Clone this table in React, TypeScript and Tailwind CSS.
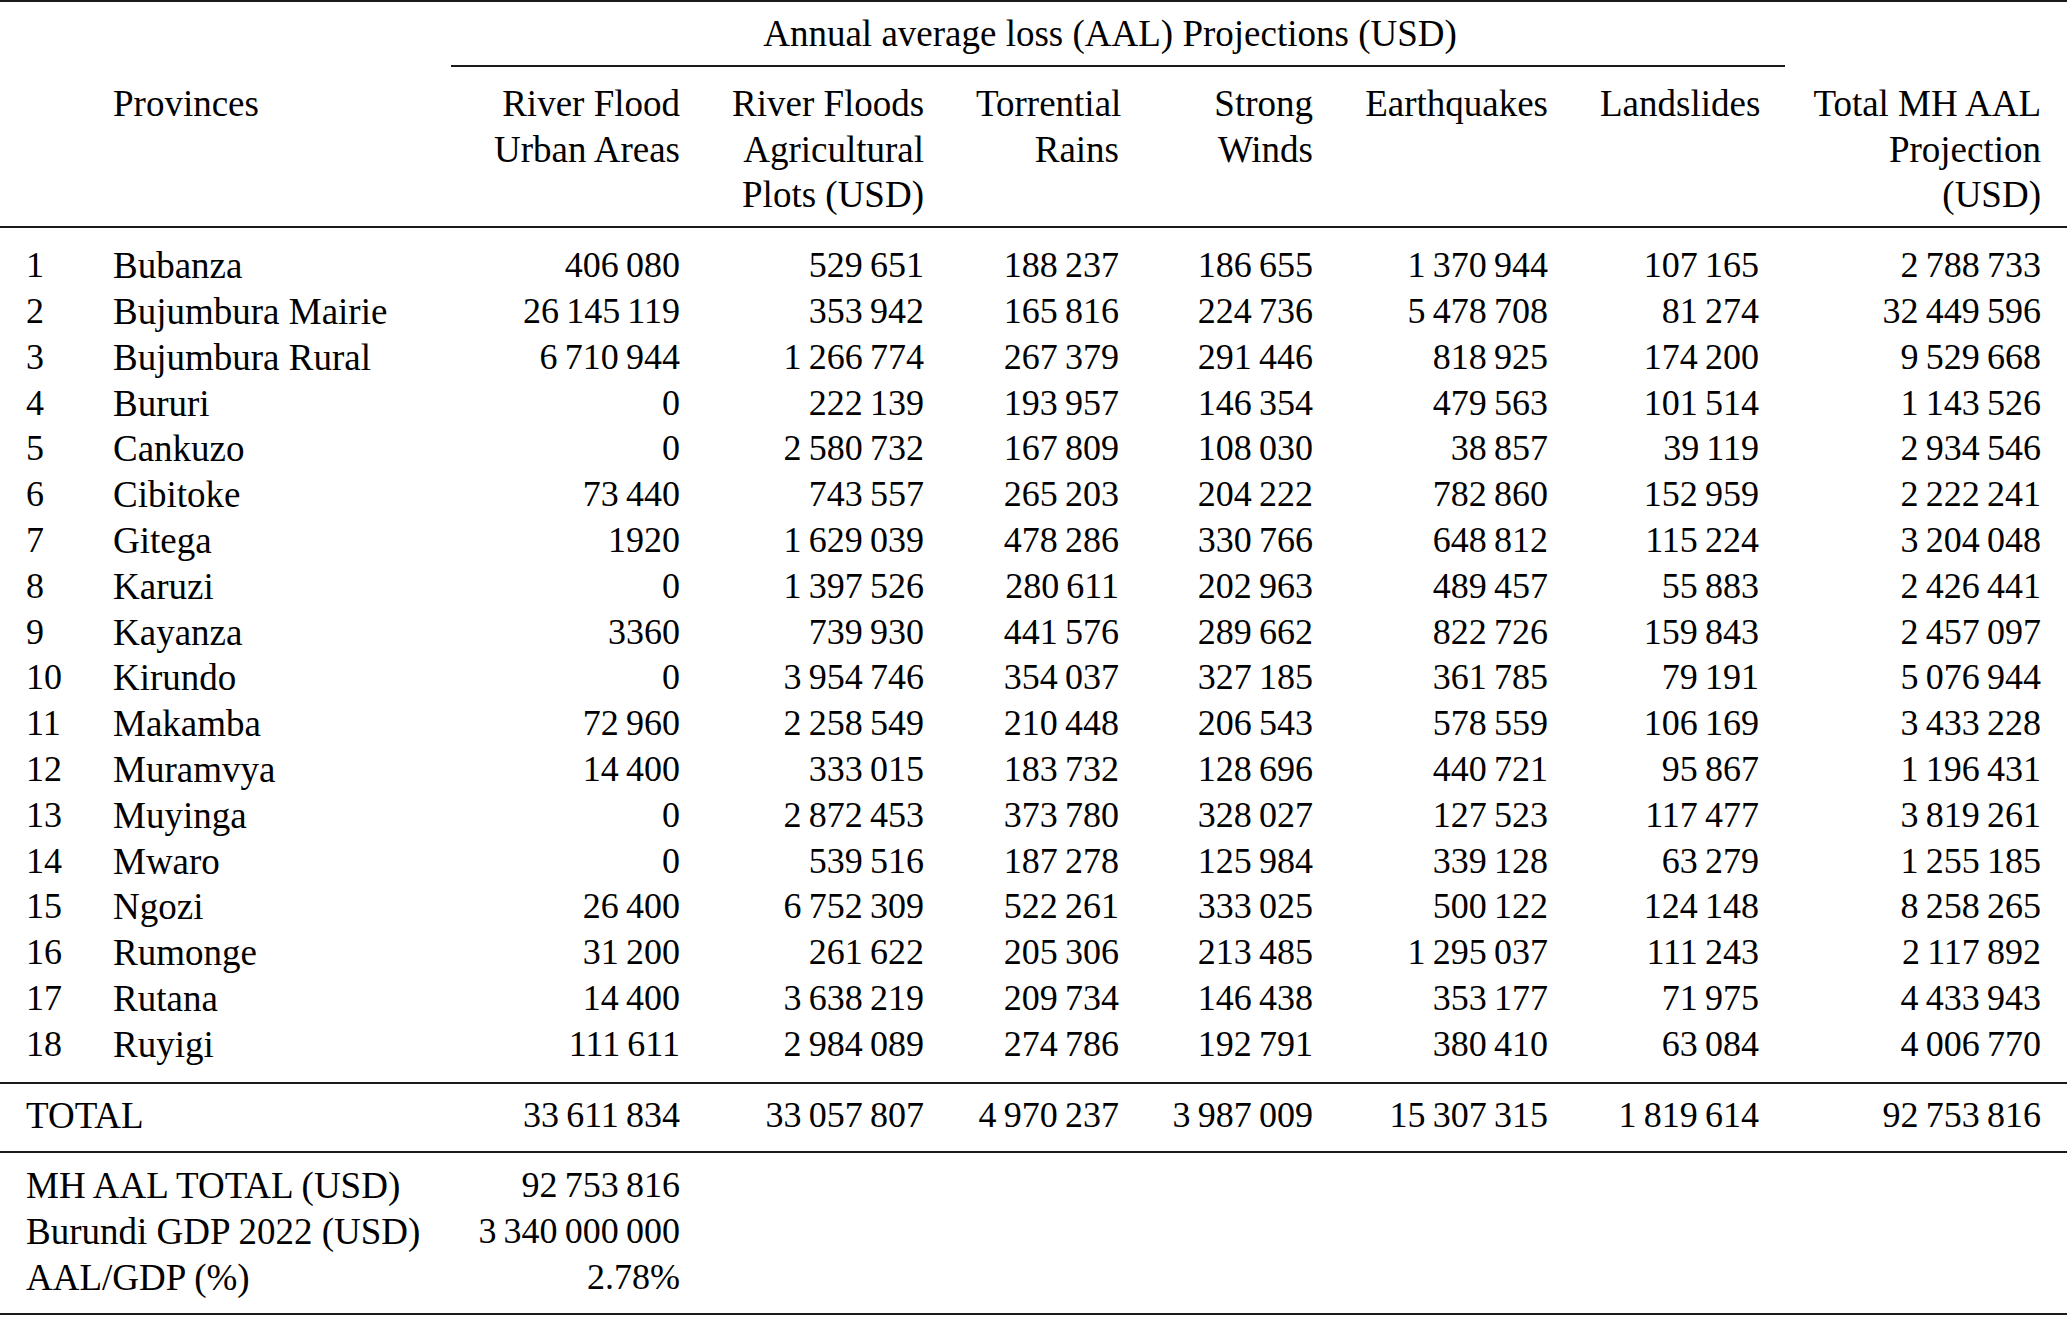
const cols = "grid grid-cols-[87px_364px_255px_244px_195px_194px_235px_211px_282px]";

const rows: [string, string[]][] = [
  ["Bubanza", ["406 080", "529 651", "188 237", "186 655", "1 370 944", "107 165", "2 788 733"]],
  ["Bujumbura Mairie", ["26 145 119", "353 942", "165 816", "224 736", "5 478 708", "81 274", "32 449 596"]],
  ["Bujumbura Rural", ["6 710 944", "1 266 774", "267 379", "291 446", "818 925", "174 200", "9 529 668"]],
  ["Bururi", ["0", "222 139", "193 957", "146 354", "479 563", "101 514", "1 143 526"]],
  ["Cankuzo", ["0", "2 580 732", "167 809", "108 030", "38 857", "39 119", "2 934 546"]],
  ["Cibitoke", ["73 440", "743 557", "265 203", "204 222", "782 860", "152 959", "2 222 241"]],
  ["Gitega", ["1920", "1 629 039", "478 286", "330 766", "648 812", "115 224", "3 204 048"]],
  ["Karuzi", ["0", "1 397 526", "280 611", "202 963", "489 457", "55 883", "2 426 441"]],
  ["Kayanza", ["3360", "739 930", "441 576", "289 662", "822 726", "159 843", "2 457 097"]],
  ["Kirundo", ["0", "3 954 746", "354 037", "327 185", "361 785", "79 191", "5 076 944"]],
  ["Makamba", ["72 960", "2 258 549", "210 448", "206 543", "578 559", "106 169", "3 433 228"]],
  ["Muramvya", ["14 400", "333 015", "183 732", "128 696", "440 721", "95 867", "1 196 431"]],
  ["Muyinga", ["0", "2 872 453", "373 780", "328 027", "127 523", "117 477", "3 819 261"]],
  ["Mwaro", ["0", "539 516", "187 278", "125 984", "339 128", "63 279", "1 255 185"]],
  ["Ngozi", ["26 400", "6 752 309", "522 261", "333 025", "500 122", "124 148", "8 258 265"]],
  ["Rumonge", ["31 200", "261 622", "205 306", "213 485", "1 295 037", "111 243", "2 117 892"]],
  ["Rutana", ["14 400", "3 638 219", "209 734", "146 438", "353 177", "71 975", "4 433 943"]],
  ["Ruyigi", ["111 611", "2 984 089", "274 786", "192 791", "380 410", "63 084", "4 006 770"]],
];

const totals = ["33 611 834", "33 057 807", "4 970 237", "3 987 009", "15 307 315", "1 819 614", "92 753 816"];

const headers = [
  ["River Flood", "Urban Areas"],
  ["River Floods", "Agricultural", "Plots (USD)"],
  ["Torrential", "Rains"],
  ["Strong", "Winds"],
  ["Earthquakes"],
  ["Landslides"],
  ["Total MH AAL", "Projection", "(USD)"],
];

const summary = [
  ["MH AAL TOTAL (USD)", "92 753 816"],
  ["Burundi GDP 2022 (USD)", "3 340 000 000"],
  ["AAL/GDP (%)", "2.78%"],
];

// thin space between digit groups, like siunitx does
const num = (s: string) => s.replace(/ /g, "\u2009");

const Rule = () => <div className="h-[2px] bg-[#1a1a1a]" />;

export default function App() {
  return (
    <div className="w-[2067px] h-[1317px] overflow-hidden bg-white text-black font-['Liberation_Serif','Times_New_Roman',serif] text-[36px] leading-[45.8px]">
      <Rule />

      {/* header */}
      <div className={`${cols} pt-[9px]`}>
        <div className="col-start-3 col-span-6 text-center pr-[16px] text-[37px]">
          Annual average loss (AAL) Projections (USD)
        </div>
        <div className="col-start-3 col-span-6 mt-[8px] h-[2px] bg-[#1a1a1a]" />
      </div>

      <div className={`${cols} mt-[14px] mb-[8px] text-[37px]`}>
        <div />
        <div className="px-[26px]">Provinces</div>
        {headers.map((lines, i) => (
          <div key={i} className="px-[26px] text-right flex flex-col">
            {lines.map((l) => (
              <span key={l} className="whitespace-nowrap">{l}</span>
            ))}
          </div>
        ))}
      </div>

      <Rule />

      {/* body */}
      <div className="mt-[15px] mb-[14px]">
        {rows.map(([name, vals], i) => (
          <div key={name} className={cols}>
            <div className="pl-[26px]">{i + 1}</div>
            <div className="px-[26px] whitespace-nowrap text-[37px]">{name}</div>
            {vals.map((v, j) => (
              <div key={j} className="px-[26px] text-right whitespace-nowrap">{num(v)}</div>
            ))}
          </div>
        ))}
      </div>

      <Rule />

      <div className={`${cols} mt-[9px] mb-[13px]`}>
        <div className="col-span-2 pl-[26px] text-[37px]">TOTAL</div>
        {totals.map((v, j) => (
          <div key={j} className="px-[26px] text-right whitespace-nowrap">{num(v)}</div>
        ))}
      </div>

      <Rule />

      <div className="mt-[10px] mb-[12px]">
        {summary.map(([label, v]) => (
          <div key={label} className={cols}>
            <div className="col-span-2 pl-[26px] whitespace-nowrap text-[37px]">{label}</div>
            <div className="px-[26px] text-right whitespace-nowrap">{num(v)}</div>
          </div>
        ))}
      </div>

      <Rule />
    </div>
  );
}
